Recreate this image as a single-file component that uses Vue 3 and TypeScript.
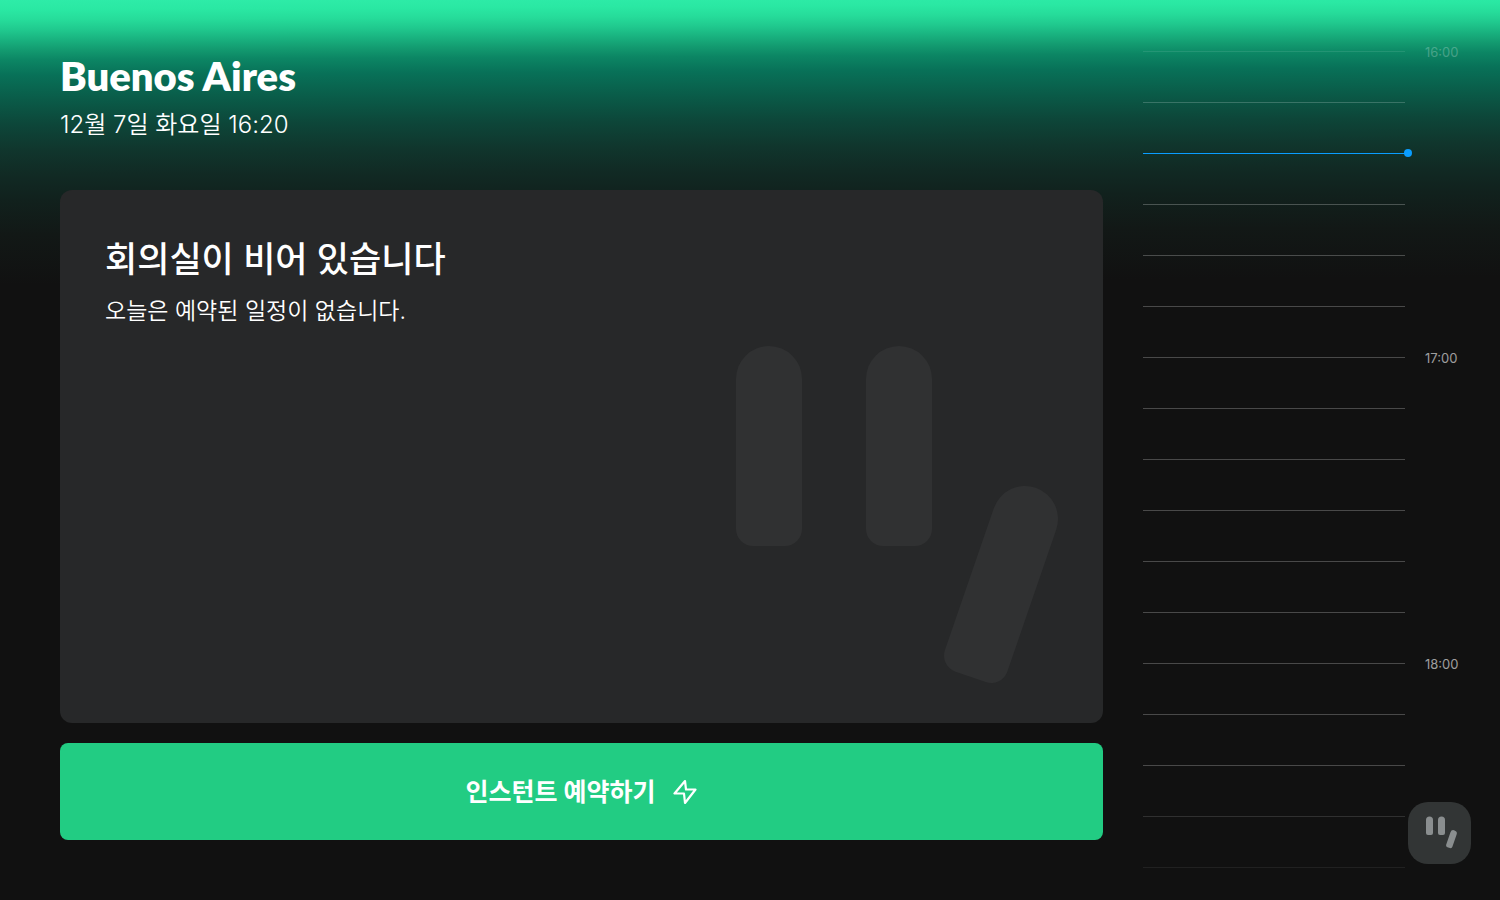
<script setup lang="ts">
interface Slot {
  id: number
  label: string
  now: boolean
  opacity: number
}

const START_HOUR = 16
const SLOT_MINUTES = 10
const SLOT_COUNT = 17
const NOW_SLOT = 2

const edgeFade: Record<number, number> = { 0: 0.4, 1: 0.8, 15: 0.55, 16: 0.3 }

const slots: Slot[] = Array.from({ length: SLOT_COUNT }, (_, i) => {
  const minutes = i * SLOT_MINUTES
  return {
    id: i,
    label: minutes % 60 === 0 ? `${START_HOUR + minutes / 60}:00` : '',
    now: i === NOW_SLOT,
    opacity: edgeFade[i] ?? 1,
  }
})
</script>

<template>
  <div class="screen">
    <main class="room">
      <header class="heading">
        <h1>Buenos Aires</h1>
        <p>12월 7일 화요일 16:20</p>
      </header>

      <section class="card">
        <h2>회의실이 비어 있습니다</h2>
        <p>오늘은 예약된 일정이 없습니다.</p>
        <svg class="watermark" viewBox="0 0 323 339" aria-hidden="true">
          <path d="M0 33a33 33 0 0 1 66 0v150a17 17 0 0 1-17 17H17a17 17 0 0 1-17-17z" />
          <path d="M130 33a33 33 0 0 1 66 0v150a17 17 0 0 1-17 17h-32a17 17 0 0 1-17-17z" />
          <path transform="translate(289 173) rotate(19)" d="M-33 0a33 33 0 0 1 66 0v150a17 17 0 0 1-17 17h-32a17 17 0 0 1-17-17z" />
        </svg>
      </section>

      <button class="book" type="button">
        <span>인스턴트 예약하기</span>
        <svg viewBox="0 0 24 26" aria-hidden="true">
          <path d="M12 2L1.500 14.500h9.500L12 24L22.500 10.500H13z" />
        </svg>
      </button>
    </main>

    <aside class="timeline">
      <ol>
        <li
          v-for="slot in slots"
          :key="slot.id"
          :class="{ now: slot.now }"
          :style="{ opacity: slot.opacity }"
        >
          <span class="line"></span>
          <time v-if="slot.label">{{ slot.label }}</time>
        </li>
      </ol>
    </aside>

    <button class="launcher" type="button" aria-label="메뉴">
      <svg viewBox="-4 0 36 34" aria-hidden="true">
        <path d="M0 4a3.500 3.500 0 0 1 7 0v13a2 2 0 0 1-2 2H2a2 2 0 0 1-2-2z" />
        <path d="M12 4a3.500 3.500 0 0 1 7 0v13a2 2 0 0 1-2 2h-3a2 2 0 0 1-2-2z" />
        <path transform="translate(27.500 17.500) rotate(19)" d="M-3.300 0a3.300 3.300 0 0 1 6.600 0v13a2 2 0 0 1-2 2h-2.600a2 2 0 0 1-2-2z" />
      </svg>
    </button>
  </div>
</template>

<style>
body {
  background: #111;
}
</style>

<style scoped>
.screen {
  box-sizing: border-box;
  position: relative;
  display: grid;
  grid-template-columns: minmax(0, 1fr) 317px;
  gap: 40px;
  min-height: 100vh;
  padding: 0 40px 0 60px;
  overflow: hidden;
  color: #fff;
  font-family: Inter, "Noto Sans CJK KR", sans-serif;
  background:
    linear-gradient(
      179.7deg,
      #2eeca8 0,
      #2ae8a3 10px,
      #26dc9a 20px,
      #20c98e 30px,
      #19b27f 40px,
      #139b70 50px,
      #0c8664 60px,
      #087158 75px,
      #0a5b48 100px,
      #0d4639 125px,
      #10362d 150px,
      #112a24 175px,
      #11211d 200px,
      #121816 235px,
      #111 285px
    );
}

h1,
h2,
p,
ol {
  margin: 0;
  padding: 0;
}

.room {
  display: flex;
  flex-direction: column;
  padding: 52px 0 60px;
}

.heading {
  height: 138px;
}

.heading h1 {
  font-family: Lato, "Noto Sans CJK KR", sans-serif;
  font-size: 40px;
  line-height: 48px;
  font-weight: 800;
}

.heading p {
  margin-top: 9px;
  font-size: 24px;
  line-height: 32px;
  font-weight: 350;
}

.card {
  position: relative;
  flex: 1;
  padding: 45px;
  border-radius: 12px;
  background: #272829;
}

.card h2 {
  font-size: 35px;
  line-height: 48px;
  font-weight: 500;
}

.card p {
  margin-top: 12px;
  font-size: 23px;
  line-height: 32px;
  font-weight: 350;
}

.watermark {
  position: absolute;
  right: 44px;
  bottom: 38px;
  width: 323px;
  height: 339px;
  fill: #303132;
}

.book {
  display: flex;
  align-items: center;
  justify-content: center;
  gap: 18px;
  height: 97px;
  margin-top: 20px;
  border: 0;
  border-radius: 8px;
  color: #fff;
  background: #22cc83;
  font-family: inherit;
  font-size: 25px;
  line-height: 32px;
  font-weight: 700;
}

.book svg {
  width: 24px;
  height: 26px;
  fill: none;
  stroke: currentColor;
  stroke-width: 2.200;
  stroke-linejoin: round;
}

.timeline ol {
  padding-top: 26px;
  list-style: none;
}

.timeline li {
  display: flex;
  align-items: center;
  gap: 20px;
  height: 51px;
}

.line {
  position: relative;
  width: 262px;
  height: 1px;
  background: rgba(255, 255, 255, 0.24);
}

.timeline time {
  color: rgba(255, 255, 255, 0.6);
  font-size: 13px;
  line-height: 16px;
}

.now .line {
  background: #0a9dff;
}

.now .line::after {
  content: "";
  position: absolute;
  top: -4px;
  right: -7px;
  width: 8px;
  height: 8px;
  border-radius: 50%;
  background: #0a9dff;
}

.launcher {
  position: absolute;
  right: 29px;
  bottom: 36px;
  display: grid;
  place-items: center;
  width: 63px;
  height: 62px;
  padding: 0;
  border: 0;
  border-radius: 20px;
  background: #323535;
}

.launcher svg {
  width: 36px;
  height: 34px;
  fill: #8a8e8f;
}
</style>
